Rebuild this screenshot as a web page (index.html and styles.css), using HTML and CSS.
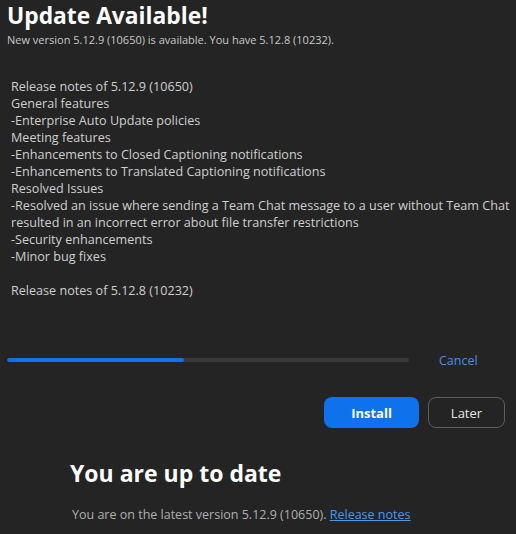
FILE: index.html
```html
<!DOCTYPE html>
<html>
<head>
<meta charset="utf-8">
<link rel="stylesheet" href="styles.css">
</head>
<body>
<div class="app">
  <section class="update">
    <h1 class="title">Update Available!</h1>
    <p class="subtitle">New version 5.12.9 (10650) is available. You have 5.12.8 (10232).</p>
    <div class="notes">
      <div>Release notes of 5.12.9 (10650)</div>
      <div>General features</div>
      <div>-Enterprise Auto Update policies</div>
      <div>Meeting features</div>
      <div>-Enhancements to Closed Captioning notifications</div>
      <div>-Enhancements to Translated Captioning notifications</div>
      <div>Resolved Issues</div>
      <div>-Resolved an issue where sending a Team Chat message to a user without Team Chat resulted in an incorrect error about file transfer restrictions</div>
      <div>-Security enhancements</div>
      <div>-Minor bug fixes</div>
      <div class="blank">&nbsp;</div>
      <div>Release notes of 5.12.8 (10232)</div>
    </div>
    <div class="progress-row">
      <div class="track"><div class="fill" style="width:44%"></div></div>
      <a class="cancel">Cancel</a>
    </div>
    <div class="actions">
      <button class="btn primary">Install</button>
      <button class="btn secondary">Later</button>
    </div>
  </section>
  <section class="uptodate">
    <h2 class="title2">You are up to date</h2>
    <p class="latest">You are on the latest version 5.12.9 (10650). <a class="link">Release notes</a></p>
  </section>
</div>
</body>
</html>
```
FILE: styles.css
```css
html, body {
  margin: 0;
  padding: 0;
  background: #242424;
}
body {
  font-family: "Open Sans", "Noto Sans", sans-serif;
  color: #d6d6d6;
  width: 516px;
  height: 534px;
  overflow: hidden;
}
.app {
  display: flex;
  flex-direction: column;
}
.update {
  padding: 0 0 0 7px;
}
.title {
  margin: 0;
  padding-top: 1px;
  font-size: 22.8px;
  line-height: 30px;
  font-weight: 700;
  color: #ffffff;
}
.subtitle {
  margin: 1px 0 0;
  font-size: 11px;
  line-height: 16px;
  color: #c8c8c8;
}
.notes {
  margin-top: 30px;
  padding-left: 4px;
  font-size: 12.6px;
  line-height: 17px;
  color: #cfcfcf;
}
.progress-row {
  display: flex;
  align-items: center;
  margin-top: 54px;
  height: 14px;
}
.track {
  width: 402px;
  height: 4px;
  border-radius: 2px;
  background: #3a3a3a;
  overflow: hidden;
}
.fill {
  height: 100%;
  background: #0e72ed;
  border-radius: 2px;
}
.cancel {
  margin-left: 30px;
  font-size: 12.5px;
  color: #4a8fe8;
}
.actions {
  display: flex;
  justify-content: flex-end;
  gap: 9px;
  margin-top: 30px;
  padding-right: 11px;
}
.btn {
  height: 31px;
  border-radius: 8px;
  font-family: inherit;
  font-size: 13px;
}
.primary {
  width: 95px;
  background: #0e72ed;
  border: none;
  color: #ffffff;
  font-weight: 700;
}
.secondary {
  width: 77px;
  background: transparent;
  border: 1px solid #5e5e5e;
  color: #e6e6e6;
}
.uptodate {
  padding-left: 70px;
  margin-top: 30px;
}
.title2 {
  margin: 0;
  font-size: 23px;
  line-height: 30px;
  font-weight: 700;
  color: #ffffff;
}
.latest {
  margin: 18px 0 0 2px;
  font-size: 12.5px;
  line-height: 17px;
  color: #b0b0b0;
}
.link {
  color: #4a9af0;
  text-decoration: underline;
}
```
